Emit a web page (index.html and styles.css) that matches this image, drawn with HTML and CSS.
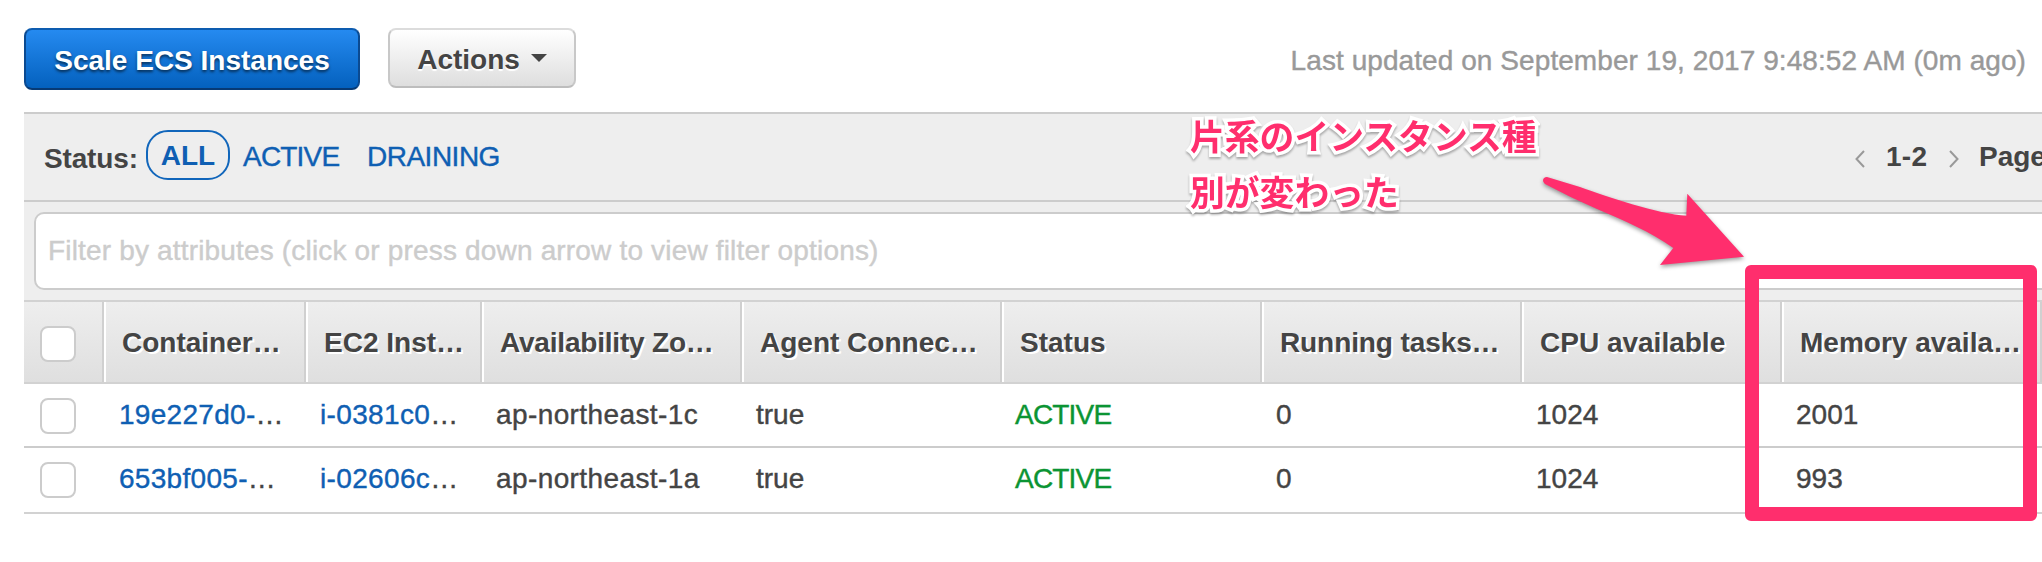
FILE: index.html
```
<!DOCTYPE html>
<html lang="ja">
<head>
<meta charset="utf-8">
<title>ECS Instances</title>
<link rel="stylesheet" href="styles.css">
</head>
<body>
<header class="toolbar">
  <button class="btn btn-primary">Scale ECS Instances</button>
  <button class="btn btn-default">Actions<span class="caret"></span></button>
  <span class="updated">Last updated on September 19, 2017 9:48:52 AM (0m ago)</span>
</header>
<main class="panel">
  <div class="status-bar">
    <span class="status-label">Status:</span>
    <a class="pill">ALL</a>
    <a class="filter-link active">ACTIVE</a>
    <a class="filter-link draining">DRAINING</a>
    <div class="pager">
      <svg class="chev" viewBox="0 0 10 18"><path d="M9 1 1.500 9 9 17"/></svg>
      <span class="range">1-2</span>
      <svg class="chev" viewBox="0 0 10 18"><path d="M1 1 8.500 9 1 17"/></svg>
      <span class="page">Page</span>
    </div>
  </div>
  <div class="filter-row"><div class="filter-input">Filter by attributes (click or press down arrow to view filter options)</div></div>
  <div class="grid head">
    <div class="cell check"><i class="box"></i></div>
    <div class="cell">Container…</div>
    <div class="cell">EC2 Inst…</div>
    <div class="cell zone">Availability Zo…</div>
    <div class="cell">Agent Connec…</div>
    <div class="cell">Status</div>
    <div class="cell tasks">Running tasks…</div>
    <div class="cell">CPU available</div>
    <div class="cell">Memory availa…</div>
  </div>
  <div class="grid row">
    <div class="cell check"><i class="box"></i></div>
    <div class="cell container"><a>19e227d0-</a>…</div>
    <div class="cell ec2"><a>i-0381c0</a>…</div>
    <div class="cell az">ap-northeast-1c</div>
    <div class="cell">true</div>
    <div class="cell ok">ACTIVE</div>
    <div class="cell">0</div>
    <div class="cell">1024</div>
    <div class="cell">2001</div>
  </div>
  <div class="grid row last">
    <div class="cell check"><i class="box"></i></div>
    <div class="cell container"><a>653bf005-</a>…</div>
    <div class="cell ec2"><a>i-02606c</a>…</div>
    <div class="cell az">ap-northeast-1a</div>
    <div class="cell">true</div>
    <div class="cell ok">ACTIVE</div>
    <div class="cell">0</div>
    <div class="cell">1024</div>
    <div class="cell">993</div>
  </div>
</main>
<p class="note">片系のインスタンス種<br>別が変わった</p>
<svg class="arrow" viewBox="0 0 220 110"><path d="M7 17C3 17 1.500 21 5 24C22 33 39 41 57 49C83 60 111 72 133.300 88L120 105 204 96.700 147.300 33.700 146.300 55.700C118 54 68 37 40 27Z"/></svg>
<div class="frame"></div>
</body>
</html>
```
FILE: styles.css
```
* { box-sizing: border-box; }
body {
  margin: 0;
  width: 2042px;
  height: 562px;
  overflow: hidden;
  position: relative;
  background: #fff;
  color: #444;
  font: 28px/34px "Liberation Sans", "Noto Sans CJK JP", sans-serif;
  white-space: nowrap;
}
.toolbar { display: flex; align-items: flex-start; height: 112px; padding: 28px 16px 0 24px; }
.btn { display: flex; align-items: center; justify-content: center; font: inherit; font-weight: bold; border: 2px solid; border-radius: 8px; padding: 0; }
.btn-primary {
  width: 336px; height: 62px; padding-top: 3px; color: #fff;
  border-color: #0d5cb0 #0b4a91 #073a75;
  background: linear-gradient(#258af0, #0461be);
  text-shadow: 0 2px 3px rgba(0,0,0,.6);
}
.btn-default {
  width: 188px; height: 60px; margin-left: 28px; padding-top: 4px; color: #444;
  border-color: #dcdcdc #c8c8c8 #bdbdbd;
  background: linear-gradient(#fff, #dedede);
  text-shadow: 0 2px 1px #fff;
}
.caret { margin: -4px 0 0 11px; border: 8px solid transparent; border-top-color: #444; border-bottom: 0; }
.updated { margin: 16px 0 0 auto; color: #999; letter-spacing: .07px; }
.updated, .filter-link, .filter-input, .row { -webkit-text-stroke: .4px currentColor; }
.panel { margin-left: 24px; }
.status-bar { display: flex; height: 90px; padding-left: 20px; border-top: 2px solid #ccc; border-bottom: 2px solid #ccc; background: #eee; color: #0f5fb3; }
.status-label { width: 102px; margin-top: 28px; color: #444; font-weight: bold; letter-spacing: -.15px; }
.pill { width: 84px; height: 50px; margin-top: 16px; line-height: 48px; text-align: center; border: 2px solid #1166bb; border-radius: 22px; font-weight: bold; }
.filter-link { margin: 26px 0 0 13px; }
.active { width: 96px; letter-spacing: -.8px; }
.draining { margin-left: 28px; letter-spacing: -.5px; }
.pager { display: flex; align-items: flex-start; width: 190px; margin: 26px 0 0 auto; color: #444; font-weight: bold; }
.chev { flex: none; width: 10px; height: 18px; margin: 10px 0 0 3px; fill: none; stroke: #999; stroke-width: 2; }
.range { flex: none; width: 81px; padding-left: 21px; letter-spacing: .3px; }
.page { flex: none; margin-left: 20px; }
.filter-row { height: 98px; padding: 10px 0 10px 10px; background: #eee; overflow: hidden; }
.filter-input { width: 2100px; height: 78px; padding: 20px 12px; border: 2px solid #ccc; border-radius: 10px; background: #fff; color: #ccc; letter-spacing: .17px; }
.grid { display: grid; grid-template-columns: 80px 202px 176px repeat(6, 260px); }
.cell { overflow: hidden; }
.head { height: 84px; border-top: 2px solid #d2d2d2; border-bottom: 2px solid #d2d2d2; background: linear-gradient(#eee, #dfdfdf); font-weight: bold; text-shadow: 2px 2px 0 #fff; }
.head .cell { padding: 24px 0 0 16px; border-left: 2px solid #fff; border-right: 2px solid #d0d0d0; }
.head .check { border-left: 0; }
.head .zone { letter-spacing: -.2px; }
.head .tasks { letter-spacing: -.1px; }
.row { height: 64px; border-bottom: 2px solid #ccc; }
.row .cell { padding: 14px 0 0 14px; }
.row .container { padding-left: 15px; letter-spacing: .3px; }
.row .ec2 { letter-spacing: .35px; }
.row .az { letter-spacing: .4px; }
.row a { color: #0f5fb3; }
.row .ok { padding-left: 13px; color: #0b9433; letter-spacing: -.8px; }
.last { height: 66px; border-color: #d2d2d2; }
.row .check { padding-left: 16px; }
.box { display: block; width: 36px; height: 36px; border: 2px solid #ccc; border-radius: 8px; background: #fff; }
.note {
  position: absolute; left: 1190px; top: 107px; margin: 0;
  font: bold 34.800px/56px "Noto Sans CJK JP", sans-serif; color: #ff2e6d;
  paint-order: stroke fill; -webkit-text-stroke: 7px #fff;
  filter: drop-shadow(0 2px 1px rgba(0,0,0,.3));
}
.arrow { position: absolute; left: 1540px; top: 160px; width: 220px; height: 110px; fill: #ff2e6d; filter: drop-shadow(0 2px 2px rgba(0,0,0,.4)); }
.frame { position: absolute; left: 1745px; top: 265px; width: 292px; height: 256px; border: 14px solid #ff2e6d; border-radius: 6px; }
```
